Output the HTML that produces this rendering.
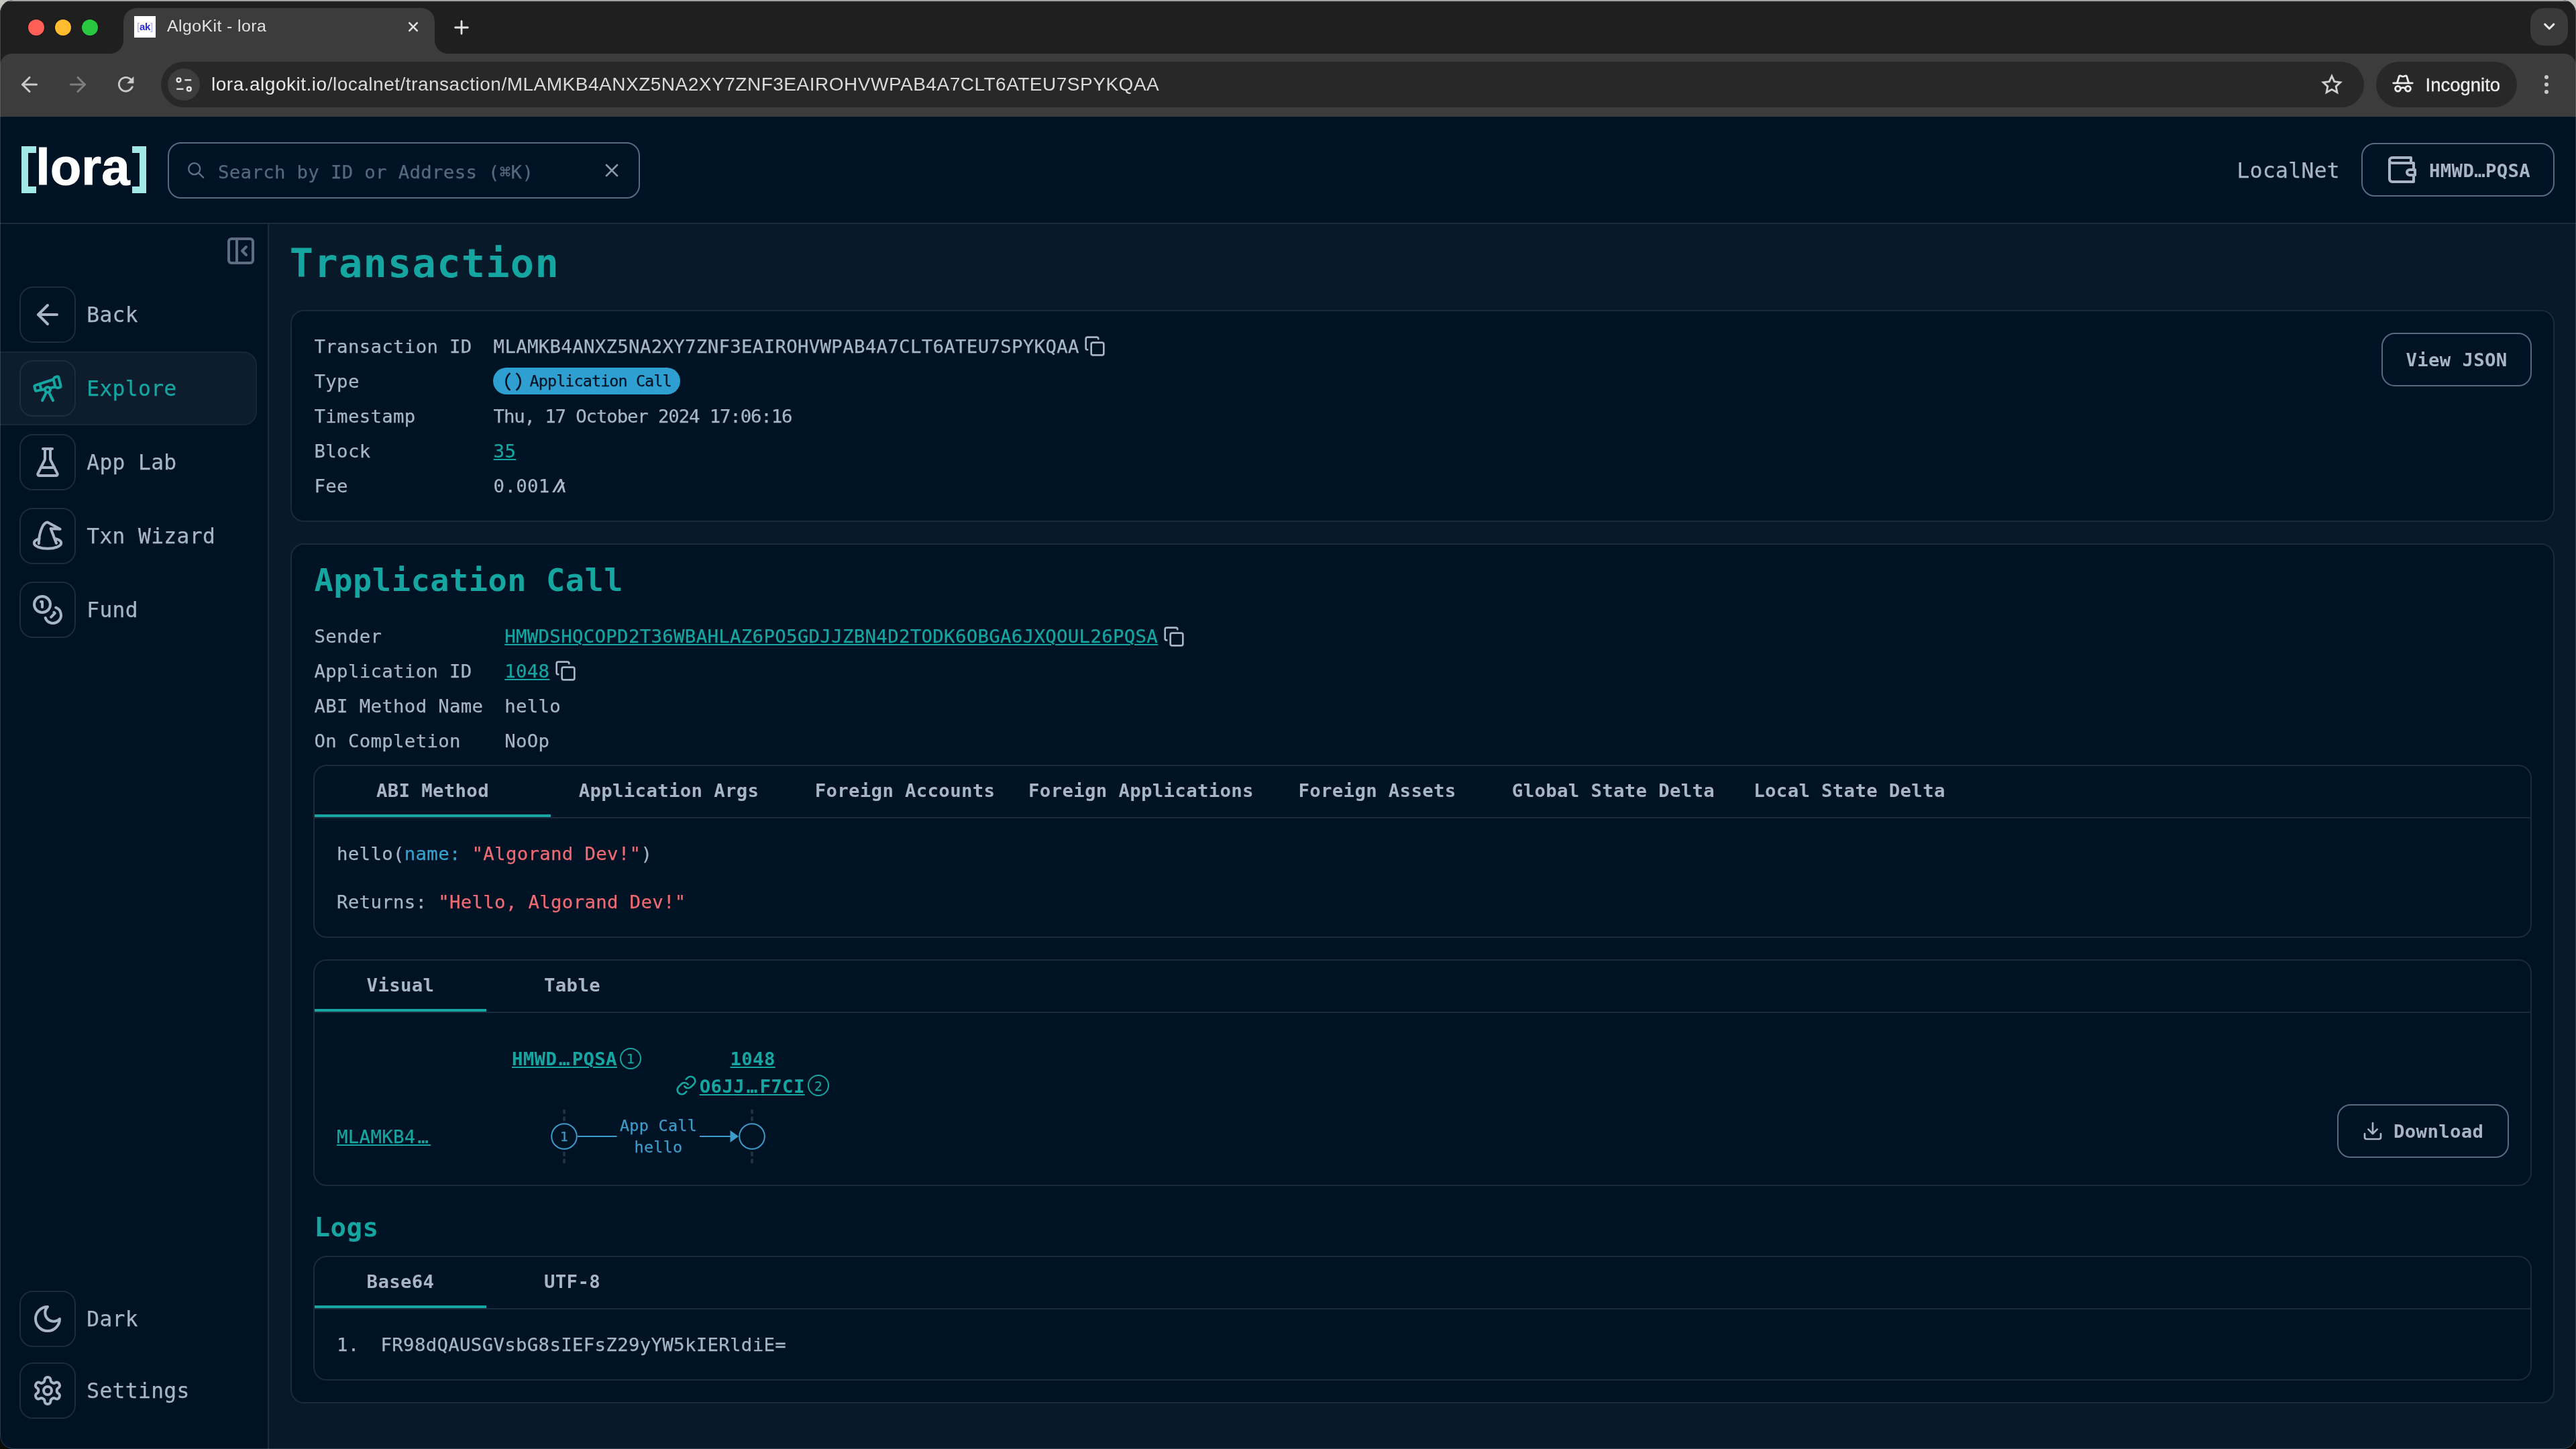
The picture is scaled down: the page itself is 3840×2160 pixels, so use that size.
<!DOCTYPE html>
<html lang="en"><head><meta charset="utf-8"><title>AlgoKit - lora</title>
<style>
html,body{margin:0;padding:0}
body{width:3840px;height:2160px;overflow:hidden;background:#0a0a08;position:relative}
#win{position:absolute;left:0;top:0;width:3840px;height:2160px;overflow:hidden;border-radius:20px;background:#001324;will-change:transform}
#corner{position:absolute;left:0;top:0;width:3840px;height:30px;background:#c6c6c1}
#edge{position:absolute;left:0;top:0;width:3840px;height:2160px;box-sizing:border-box;border-radius:20px;border:1px solid rgba(150,170,190,.28);border-top:0;pointer-events:none}
.t{position:absolute;white-space:pre;margin:0;font-weight:400}
.m{font-family:"DejaVu Sans Mono","Liberation Mono",monospace;-webkit-text-stroke:0.25px currentColor}
.m.b{-webkit-text-stroke:0}
.s{font-family:"Liberation Sans",sans-serif}
.b{font-weight:700}
a.u{text-decoration:underline;text-decoration-thickness:2px;text-underline-offset:1.500px;text-decoration-skip-ink:auto}
h1,h2,h3{margin:0}
</style></head>
<body>
<div id="corner"></div>
<div id="win">
<header id="chrome">
<div style="position:absolute;left:0px;top:0px;width:3840px;height:110px;background:#1f1f1f;"></div>
<div style="position:absolute;left:0px;top:0px;width:3840px;height:3px;background:linear-gradient(#b1b1b1 0,#b0b0b0 1.200px,#555 2px,#1b1b1b 2.700px,#1b1b1b 3px);"></div>
<div style="position:absolute;left:41.8px;top:28.8px;width:24.4px;height:24.4px;border-radius:50%;background:#fe5f57;box-shadow:0 0 0 1px rgba(0,0,0,.3);"></div>
<div style="position:absolute;left:81.8px;top:28.8px;width:24.4px;height:24.4px;border-radius:50%;background:#febc2e;box-shadow:0 0 0 1px rgba(0,0,0,.3);"></div>
<div style="position:absolute;left:121.8px;top:28.8px;width:24.4px;height:24.4px;border-radius:50%;background:#28c840;box-shadow:0 0 0 1px rgba(0,0,0,.3);"></div>
<div style="position:absolute;left:184px;top:12px;width:464px;height:68px;background:#3c3c3c;border-radius:20px 20px 0 0;"></div>
<div style="position:absolute;left:164px;top:60px;width:20px;height:20px;background:radial-gradient(circle at 0 0,rgba(60,60,60,0) 19.5px,#3c3c3c 20.5px);"></div>
<div style="position:absolute;left:648px;top:60px;width:20px;height:20px;background:radial-gradient(circle at 100% 0,rgba(60,60,60,0) 19.5px,#3c3c3c 20.5px);"></div>
<div style="position:absolute;left:200px;top:24px;width:32px;height:32px;background:#fff;"></div>
<div class="t s b" style="left:-784.00px;width:2000px;text-align:center;top:31.70px;font-size:15px;line-height:15px;color:#2b2bd8;letter-spacing:-0.3px;"><span style="color:#a8a8ee;font-weight:400">[</span>ak<span style="color:#a8a8ee;font-weight:400">]</span></div>
<div class="t s" style="left:249.00px;top:27.30px;font-size:24.8px;line-height:24.8px;color:#e3e3e3;letter-spacing:0.45px;">AlgoKit - lora</div>
<svg style="position:absolute;left:604px;top:28px;" width="24" height="24" viewBox="0 0 24 24" fill="none" stroke="#e3e3e3" stroke-width="2.6" stroke-linecap="round" stroke-linejoin="round"><path d="M6.2 6.2 17.8 17.8M17.8 6.2 6.2 17.8"/></svg>
<svg style="position:absolute;left:674px;top:26.5px;" width="28" height="28" viewBox="0 0 24 24" fill="none" stroke="#e3e3e3" stroke-width="2.4" stroke-linecap="round" stroke-linejoin="round"><path d="M12 4v16M4 12h16"/></svg>
<div style="position:absolute;left:3772px;top:12px;width:56px;height:56px;background:#3a3a3a;border-radius:20px;"></div>
<svg style="position:absolute;left:3786.85px;top:26.4px;" width="26.5" height="26.5" viewBox="0 0 24 24" fill="none" stroke="#e8e8e8" stroke-width="2.7" stroke-linecap="round" stroke-linejoin="round"><path d="m6 9.2 6 6 6-6"/></svg>
<div style="position:absolute;left:0px;top:80px;width:3840px;height:94px;background:#3c3c3c;border-radius:18px 18px 0 0;"></div>
<svg style="position:absolute;left:26px;top:108px;" width="36" height="36" viewBox="0 0 24 24" fill="none" stroke="#c9c9c9" stroke-width="2.1" stroke-linecap="round" stroke-linejoin="round"><path d="m12 19-7-7 7-7"/><path d="M19 12H5"/></svg>
<svg style="position:absolute;left:98px;top:108px;" width="36" height="36" viewBox="0 0 24 24" fill="none" stroke="#7d7d7d" stroke-width="2.1" stroke-linecap="round" stroke-linejoin="round"><path d="m12 19 7-7-7-7"/><path d="M5 12h14"/></svg>
<svg style="position:absolute;left:170.050px;top:108.450px" width="35.300" height="35.300" viewBox="0 0 24 24" fill="#c9c9c9"><path d="M17.650 6.350C16.200 4.900 14.210 4 12 4c-4.420 0-7.990 3.580-7.990 8s3.570 8 7.990 8c3.730 0 6.840-2.550 7.730-6h-2.080c-.820 2.330-3.040 4-5.650 4-3.310 0-6-2.690-6-6s2.690-6 6-6c1.660 0 3.140.690 4.220 1.780L13 11h7V4l-2.350 2.350z"/></svg>
<div style="position:absolute;left:240px;top:92px;width:3284px;height:68px;background:#282828;border-radius:34px;"></div>
<div style="position:absolute;left:250px;top:102px;width:48px;height:48px;background:#3d3d3d;border-radius:50%;"></div>
<svg style="position:absolute;left:250px;top:102px" width="48" height="48" viewBox="250 102 48 48" fill="none" stroke="#e3e3e3" stroke-width="2.400"><circle cx="266.500" cy="119.300" r="2.900"/><path d="M275.300 119.300h9.800"/><circle cx="281.800" cy="132.700" r="2.900"/><path d="M263.200 132.700h10.300"/></svg>
<div class="t s url" style="left:315.00px;top:112.09px;font-size:28px;line-height:28px;color:#dadada;letter-spacing:0.51px;"><span style="color:#e8e8e8">lora.algokit.io</span>/localnet/transaction/MLAMKB4ANXZ5NA2XY7ZNF3EAIROHVWPAB4A7CLT6ATEU7SPYKQAA</div>
<svg style="position:absolute;left:3458px;top:108px;stroke-linejoin:miter;" width="36" height="36" viewBox="0 0 24 24" fill="none" stroke="#d0d0d0" stroke-width="1.9" stroke-linecap="round" stroke-linejoin="round"><path d="M12 3.600l2.550 5.500 5.950.700-4.400 4.100 1.150 5.900L12 16.850 6.750 19.800l1.150-5.900-4.400-4.100 5.950-.700z"/></svg>
<div style="position:absolute;left:3542px;top:92px;width:210px;height:68px;background:#282828;border-radius:34px;"></div>
<svg style="position:absolute;left:3564px;top:107px;" width="36" height="36" viewBox="0 0 24 24" fill="none" stroke="#ececec" stroke-width="1.9" stroke-linecap="round" stroke-linejoin="round"><path d="M2.500 11.200h19"/><path d="M6.300 11 8.200 4.700c.2-.6.800-.9 1.400-.7l1.300.5c.7.300 1.500.3 2.200 0l1.300-.5c.6-.2 1.200.1 1.400.7L17.700 11"/><circle cx="7" cy="16.800" r="2.600"/><circle cx="17" cy="16.800" r="2.600"/><path d="M9.600 16.500c1.500-.9 3.300-.9 4.800 0"/></svg>
<div class="t s" style="left:3615.50px;top:112.92px;font-size:27.5px;line-height:27.5px;color:#ececec;letter-spacing:0.0px;-webkit-text-stroke:0.3px #ececec;">Incognito</div>
<div style="position:absolute;left:3792.7px;top:111.7px;width:6.6px;height:6.6px;border-radius:50%;background:#c9c9c9;"></div>
<div style="position:absolute;left:3792.7px;top:122.7px;width:6.6px;height:6.6px;border-radius:50%;background:#c9c9c9;"></div>
<div style="position:absolute;left:3792.7px;top:133.7px;width:6.6px;height:6.6px;border-radius:50%;background:#c9c9c9;"></div>
</header>
<header id="apphead">
<div style="position:absolute;left:0px;top:174px;width:3840px;height:158px;background:#001324;border-bottom:2px solid #1a2b3d;"></div>
<div style="position:absolute;left:32px;top:218px;width:10px;height:70px;background:#a0e7e7;"></div>
<div style="position:absolute;left:32px;top:218px;width:21.5px;height:10px;background:#a0e7e7;"></div>
<div style="position:absolute;left:32px;top:278px;width:21.5px;height:10px;background:#a0e7e7;"></div>
<div style="position:absolute;left:208px;top:218px;width:10px;height:70px;background:#a0e7e7;"></div>
<div style="position:absolute;left:196.5px;top:218px;width:21.5px;height:10px;background:#a0e7e7;"></div>
<div style="position:absolute;left:196.5px;top:278px;width:21.5px;height:10px;background:#a0e7e7;"></div>
<div class="t s b" style="left:53.50px;top:212.07px;font-size:75.5px;line-height:75.5px;color:#ffffff;letter-spacing:0.5px;-webkit-text-stroke:1.2px #fff;">lora</div>
<div style="position:absolute;left:250px;top:212px;width:704px;height:84px;box-sizing:border-box;border:2px solid #5a6980;border-radius:20px;"></div>
<svg style="position:absolute;left:270px;top:232px" width="60" height="45" viewBox="0 0 60 45" fill="none" stroke="#5e7187" stroke-width="2.300" stroke-linecap="round"><circle cx="19.700" cy="19.600" r="8.450"/><path d="M25.800 25.700 33.100 32.700"/></svg>
<div class="t m" style="left:325.00px;top:242.85px;font-size:27.356px;line-height:27.356px;color:#56687f;letter-spacing:0.330px;">Search by ID or Address (⌘K)</div>
<svg style="position:absolute;left:895.5px;top:238px;" width="32" height="32" viewBox="0 0 24 24" fill="none" stroke="#8b98ab" stroke-width="2" stroke-linecap="round" stroke-linejoin="round"><path d="M18 6 6 18"/><path d="m6 6 12 12"/></svg>
<div class="t m" style="left:3334.50px;top:239.44px;font-size:31.264px;line-height:31.264px;color:#a9b4c8;letter-spacing:0.378px;">LocalNet</div>
<div style="position:absolute;left:3520px;top:213px;width:288px;height:80px;box-sizing:border-box;border:2px solid #5a6980;border-radius:20px;"></div>
<svg style="position:absolute;left:3556.2px;top:228.8px;" width="48" height="48" viewBox="0 0 24 24" fill="none" stroke="#a9b4c8" stroke-width="2" stroke-linecap="round" stroke-linejoin="round"><path d="M21 12V7H5a2 2 0 0 1 0-4h14v4"/><path d="M3 5v14a2 2 0 0 0 2 2h16v-5"/><path d="M18 12a2 2 0 0 0 0 4h4v-4Z"/></svg>
<div class="t m b" style="left:3621.00px;top:240.75px;font-size:27.356px;line-height:27.356px;color:#a9b4c8;letter-spacing:0.330px;">HMWD…PQSA</div>
</header>
<nav id="side">
<div style="position:absolute;left:0px;top:334px;width:399px;height:1826px;background:#001324;border-right:2px solid #1a2b3d;"></div>
<svg style="position:absolute;left:335.3px;top:350px;" width="48" height="48" viewBox="0 0 24 24" fill="none" stroke="#5f6c81" stroke-width="2" stroke-linecap="round" stroke-linejoin="round"><rect width="18" height="18" x="3" y="3" rx="2"/><path d="M9 3v18"/><path d="m16 15-3-3 3-3"/></svg>
<div style="position:absolute;left:-2px;top:524px;width:385px;height:110px;box-sizing:border-box;background:#0d1d2e;border:2px solid #16273a;border-radius:0 20px 20px 0;"></div>
<div style="position:absolute;left:29px;top:427px;width:84px;height:84px;box-sizing:border-box;border:2px solid #1b2c3f;border-radius:20px;"></div>
<svg style="position:absolute;left:47px;top:445px;" width="48" height="48" viewBox="0 0 24 24" fill="none" stroke="#a9b4c8" stroke-width="2" stroke-linecap="round" stroke-linejoin="round"><path d="m12 19-7-7 7-7"/><path d="M19 12H5"/></svg>
<div class="t m" style="left:129.20px;top:454.24px;font-size:31.264px;line-height:31.264px;color:#a9b4c8;letter-spacing:0.378px;">Back</div>
<div style="position:absolute;left:29px;top:537px;width:84px;height:84px;box-sizing:border-box;border:2px solid #1d2d40;border-radius:20px;"></div>
<svg style="position:absolute;left:47px;top:555px;" width="48" height="48" viewBox="0 0 24 24" fill="none" stroke="#15a6a1" stroke-width="2" stroke-linecap="round" stroke-linejoin="round"><path d="m10.065 12.493-6.18 1.318a.934.934 0 0 1-1.108-.702l-.537-2.15a1.07 1.07 0 0 1 .691-1.265l13.504-4.44"/><path d="m13.56 11.747 4.332-.924"/><path d="m16 21-3.105-6.21"/><path d="M16.485 5.94a2 2 0 0 1 1.455-2.425l1.09-.272a1 1 0 0 1 1.212.727l1.515 6.06a1 1 0 0 1-.727 1.213l-1.09.272a2 2 0 0 1-2.425-1.455z"/><path d="m6.158 8.633 1.114 4.456"/><path d="m8 21 3.105-6.21"/><circle cx="12" cy="13" r="2"/></svg>
<div class="t m" style="left:129.20px;top:564.24px;font-size:31.264px;line-height:31.264px;color:#15a6a1;letter-spacing:0.378px;">Explore</div>
<div style="position:absolute;left:29px;top:646.5px;width:84px;height:84px;box-sizing:border-box;border:2px solid #1b2c3f;border-radius:20px;"></div>
<svg style="position:absolute;left:47px;top:664.5px;" width="48" height="48" viewBox="0 0 24 24" fill="none" stroke="#a9b4c8" stroke-width="2" stroke-linecap="round" stroke-linejoin="round"><path d="M10 2v7.527a2 2 0 0 1-.211.896L4.72 20.55a1 1 0 0 0 .9 1.45h12.76a1 1 0 0 0 .9-1.45l-5.069-10.127A2 2 0 0 1 14 9.527V2"/><path d="M8.5 2h7"/><path d="M7 16h10"/></svg>
<div class="t m" style="left:129.20px;top:673.74px;font-size:31.264px;line-height:31.264px;color:#a9b4c8;letter-spacing:0.378px;">App Lab</div>
<div style="position:absolute;left:29px;top:756.5px;width:84px;height:84px;box-sizing:border-box;border:2px solid #1b2c3f;border-radius:20px;"></div>
<svg style="position:absolute;left:47px;top:774.5px;" width="48" height="48" viewBox="0 0 24 24" fill="none" stroke="#a9b4c8" stroke-width="2" stroke-linecap="round" stroke-linejoin="round"><path d="M5.400 17.600C5.500 13 6.300 9 7.700 6 8.800 3.600 10.300 1.900 11.900 1.800L21.300 6.900 14.300 6.500 18.500 17.400"/><path d="M5.800 14.100C3.400 14.700 1.900 15.900 1.900 17.300 1.900 19.600 6.400 21.400 12 21.400S22.100 19.600 22.100 17.300C22.100 15.900 20.600 14.700 18.200 14.100"/></svg>
<div class="t m" style="left:129.20px;top:783.74px;font-size:31.264px;line-height:31.264px;color:#a9b4c8;letter-spacing:0.378px;">Txn Wizard</div>
<div style="position:absolute;left:29px;top:866.5px;width:84px;height:84px;box-sizing:border-box;border:2px solid #1b2c3f;border-radius:20px;"></div>
<svg style="position:absolute;left:47px;top:884.5px;" width="48" height="48" viewBox="0 0 24 24" fill="none" stroke="#a9b4c8" stroke-width="2" stroke-linecap="round" stroke-linejoin="round"><circle cx="8" cy="8" r="6"/><path d="M18.09 10.37A6 6 0 1 1 10.34 18"/><path d="M7 6h1v4"/><path d="m16.71 13.88.7.71-2.82 2.82"/></svg>
<div class="t m" style="left:129.20px;top:893.74px;font-size:31.264px;line-height:31.264px;color:#a9b4c8;letter-spacing:0.378px;">Fund</div>
<div style="position:absolute;left:29px;top:1924px;width:84px;height:84px;box-sizing:border-box;border:2px solid #1b2c3f;border-radius:20px;"></div>
<svg style="position:absolute;left:47px;top:1942px;" width="48" height="48" viewBox="0 0 24 24" fill="none" stroke="#a9b4c8" stroke-width="2" stroke-linecap="round" stroke-linejoin="round"><path d="M12 3a6 6 0 0 0 9 9 9 9 0 1 1-9-9Z"/></svg>
<div class="t m" style="left:129.20px;top:1951.24px;font-size:31.264px;line-height:31.264px;color:#a9b4c8;letter-spacing:0.378px;">Dark</div>
<div style="position:absolute;left:29px;top:2031px;width:84px;height:84px;box-sizing:border-box;border:2px solid #1b2c3f;border-radius:20px;"></div>
<svg style="position:absolute;left:47px;top:2049px;" width="48" height="48" viewBox="0 0 24 24" fill="none" stroke="#a9b4c8" stroke-width="2" stroke-linecap="round" stroke-linejoin="round"><path d="M12.22 2h-.44a2 2 0 0 0-2 2v.18a2 2 0 0 1-1 1.73l-.43.25a2 2 0 0 1-2 0l-.15-.08a2 2 0 0 0-2.73.73l-.22.38a2 2 0 0 0 .73 2.73l.15.1a2 2 0 0 1 1 1.72v.51a2 2 0 0 1-1 1.74l-.15.09a2 2 0 0 0-.73 2.73l.22.38a2 2 0 0 0 2.73.73l.15-.08a2 2 0 0 1 2 0l.43.25a2 2 0 0 1 1 1.73V20a2 2 0 0 0 2 2h.44a2 2 0 0 0 2-2v-.18a2 2 0 0 1 1-1.73l.43-.25a2 2 0 0 1 2 0l.15.08a2 2 0 0 0 2.73-.73l.22-.39a2 2 0 0 0-.73-2.73l-.15-.08a2 2 0 0 1-1-1.74v-.5a2 2 0 0 1 1-1.74l.15-.09a2 2 0 0 0 .73-2.73l-.22-.38a2 2 0 0 0-2.73-.73l-.15.08a2 2 0 0 1-2 0l-.43-.25a2 2 0 0 1-1-1.73V4a2 2 0 0 0-2-2z"/><circle cx="12" cy="12" r="3"/></svg>
<div class="t m" style="left:129.20px;top:2058.24px;font-size:31.264px;line-height:31.264px;color:#a9b4c8;letter-spacing:0.378px;">Settings</div>
</nav>
<main id="main">
<div style="position:absolute;left:401px;top:334px;width:3439px;height:1826px;background:#08192a;"></div>
<h1 class="t m b" style="left:431.80px;top:363.90px;font-size:58.62px;line-height:58.62px;color:#15a6a1;letter-spacing:1.278px;">Transaction</h1>
<section style="position:absolute;left:433px;top:462px;width:3375px;height:316px;box-sizing:border-box;background:#001324;border:2px solid #1a2b3d;border-radius:20px;"></section>
<div class="t m" style="left:468.50px;top:503.35px;font-size:27.356px;line-height:27.356px;color:#a9b4c8;letter-spacing:0.330px;">Transaction ID</div>
<div class="t m" style="left:468.50px;top:555.35px;font-size:27.356px;line-height:27.356px;color:#a9b4c8;letter-spacing:0.330px;">Type</div>
<div class="t m" style="left:468.50px;top:607.35px;font-size:27.356px;line-height:27.356px;color:#a9b4c8;letter-spacing:0.330px;">Timestamp</div>
<div class="t m" style="left:468.50px;top:659.35px;font-size:27.356px;line-height:27.356px;color:#a9b4c8;letter-spacing:0.330px;">Block</div>
<div class="t m" style="left:468.50px;top:711.35px;font-size:27.356px;line-height:27.356px;color:#a9b4c8;letter-spacing:0.330px;">Fee</div>
<div class="t m" style="left:735.60px;top:503.35px;font-size:27.356px;line-height:27.356px;color:#a9b4c8;letter-spacing:0.330px;">MLAMKB4ANXZ5NA2XY7ZNF3EAIROHVWPAB4A7CLT6ATEU7SPYKQAA</div>
<svg style="position:absolute;left:1616px;top:500px;" width="32" height="32" viewBox="0 0 24 24" fill="none" stroke="#a9b4c8" stroke-width="2" stroke-linecap="round" stroke-linejoin="round"><rect width="14" height="14" x="8" y="8" rx="2" ry="2"/><path d="M4 16c-1.1 0-2-.9-2-2V4c0-1.1.9-2 2-2h10c1.1 0 2 .9 2 2"/></svg>
<div style="position:absolute;left:735px;top:548px;width:279px;height:40px;background:#2e9fd0;border-radius:20px;"></div>
<svg style="position:absolute;left:749px;top:553px;" width="32" height="32" viewBox="0 0 24 24" fill="none" stroke="#001324" stroke-width="2" stroke-linecap="round" stroke-linejoin="round"><path d="M8 21s-4-3-4-9 4-9 4-9"/><path d="M16 3s4 3 4 9-4 9-4 9"/></svg>
<div class="t m" style="left:789.60px;top:557.46px;font-size:23.448px;line-height:23.448px;color:#001324;letter-spacing:-0.917px;">Application Call</div>
<div class="t m" style="left:735.60px;top:607.35px;font-size:27.356px;line-height:27.356px;color:#a9b4c8;letter-spacing:-1.126px;">Thu, 17 October 2024 17:06:16</div>
<a class="t m u" style="left:735.60px;top:659.35px;font-size:27.356px;line-height:27.356px;color:#15a6a1;letter-spacing:0.330px;">35</a>
<div class="t m" style="left:735.60px;top:711.35px;font-size:27.356px;line-height:27.356px;color:#a9b4c8;letter-spacing:0.330px;">0.001</div>
<svg style="position:absolute;left:823.200px;top:714px" width="20" height="20" viewBox="20 4 192.500 192.500" fill="#a9b4c8"><polygon points="212.100,196.300 181.900,196.300 162.400,123.500 120.400,196.300 86.800,196.300 151.700,83.800 141.200,44.700 53.700,196.300 20.100,196.300 131,4.100 160.400,4.100 173.200,51.900 203.600,51.900 182.900,87.900"/></svg>
<div style="position:absolute;left:3550px;top:496px;width:224px;height:80px;box-sizing:border-box;border:2px solid #5a6980;border-radius:20px;"></div>
<div class="t m b" style="left:2662.00px;width:2000px;text-align:center;top:523.35px;font-size:27.356px;line-height:27.356px;color:#a9b4c8;letter-spacing:0.330px;">View JSON</div>
<section style="position:absolute;left:433px;top:810px;width:3375px;height:1282px;box-sizing:border-box;background:#001324;border:2px solid #1a2b3d;border-radius:20px;"></section>
<h2 class="t m b" style="left:468.50px;top:842.32px;font-size:46.896px;line-height:46.896px;color:#15a6a1;letter-spacing:0.566px;">Application Call</h2>
<div class="t m" style="left:468.50px;top:935.35px;font-size:27.356px;line-height:27.356px;color:#a9b4c8;letter-spacing:0.330px;">Sender</div>
<div class="t m" style="left:468.50px;top:987.35px;font-size:27.356px;line-height:27.356px;color:#a9b4c8;letter-spacing:0.330px;">Application ID</div>
<div class="t m" style="left:468.50px;top:1039.35px;font-size:27.356px;line-height:27.356px;color:#a9b4c8;letter-spacing:0.330px;">ABI Method Name</div>
<div class="t m" style="left:468.50px;top:1091.35px;font-size:27.356px;line-height:27.356px;color:#a9b4c8;letter-spacing:0.330px;">On Completion</div>
<a class="t m u" style="left:752.20px;top:935.35px;font-size:27.356px;line-height:27.356px;color:#15a6a1;letter-spacing:0.330px;">HMWDSHQCOPD2T36WBAHLAZ6PO5GDJJZBN4D2TODK6OBGA6JXQOUL26PQSA</a>
<svg style="position:absolute;left:1734px;top:933px;" width="32" height="32" viewBox="0 0 24 24" fill="none" stroke="#a9b4c8" stroke-width="2" stroke-linecap="round" stroke-linejoin="round"><rect width="14" height="14" x="8" y="8" rx="2" ry="2"/><path d="M4 16c-1.1 0-2-.9-2-2V4c0-1.1.9-2 2-2h10c1.1 0 2 .9 2 2"/></svg>
<a class="t m u" style="left:752.20px;top:987.35px;font-size:27.356px;line-height:27.356px;color:#15a6a1;letter-spacing:0.330px;">1048</a>
<svg style="position:absolute;left:827px;top:984px;" width="32" height="32" viewBox="0 0 24 24" fill="none" stroke="#a9b4c8" stroke-width="2" stroke-linecap="round" stroke-linejoin="round"><rect width="14" height="14" x="8" y="8" rx="2" ry="2"/><path d="M4 16c-1.1 0-2-.9-2-2V4c0-1.1.9-2 2-2h10c1.1 0 2 .9 2 2"/></svg>
<div class="t m" style="left:752.20px;top:1039.35px;font-size:27.356px;line-height:27.356px;color:#a9b4c8;letter-spacing:0.330px;">hello</div>
<div class="t m" style="left:752.20px;top:1091.35px;font-size:27.356px;line-height:27.356px;color:#a9b4c8;letter-spacing:0.330px;">NoOp</div>
<div style="position:absolute;left:467px;top:1140px;width:3307px;height:258px;box-sizing:border-box;border:2px solid #1a2b3d;border-radius:20px;"></div>
<div style="position:absolute;left:469px;top:1142px;width:3303px;height:76px;border-bottom:2px solid #1a2b3d;"></div><div style="position:absolute;left:469px;top:1214px;width:352px;height:4px;background:#15a6a1;"></div><div class="t m b" style="left:-355.00px;width:2000px;text-align:center;top:1165.35px;font-size:27.356px;line-height:27.356px;color:#a9b4c8;letter-spacing:0.330px;">ABI Method</div><div class="t m b" style="left:-3.00px;width:2000px;text-align:center;top:1165.35px;font-size:27.356px;line-height:27.356px;color:#a9b4c8;letter-spacing:0.330px;">Application Args</div><div class="t m b" style="left:349.00px;width:2000px;text-align:center;top:1165.35px;font-size:27.356px;line-height:27.356px;color:#a9b4c8;letter-spacing:0.330px;">Foreign Accounts</div><div class="t m b" style="left:701.00px;width:2000px;text-align:center;top:1165.35px;font-size:27.356px;line-height:27.356px;color:#a9b4c8;letter-spacing:0.330px;">Foreign Applications</div><div class="t m b" style="left:1053.00px;width:2000px;text-align:center;top:1165.35px;font-size:27.356px;line-height:27.356px;color:#a9b4c8;letter-spacing:0.330px;">Foreign Assets</div><div class="t m b" style="left:1405.00px;width:2000px;text-align:center;top:1165.35px;font-size:27.356px;line-height:27.356px;color:#a9b4c8;letter-spacing:0.330px;">Global State Delta</div><div class="t m b" style="left:1757.00px;width:2000px;text-align:center;top:1165.35px;font-size:27.356px;line-height:27.356px;color:#a9b4c8;letter-spacing:0.330px;">Local State Delta</div>
<div class="t m" style="left:502.00px;top:1258.85px;font-size:27.356px;line-height:27.356px;color:#a9b4c8;letter-spacing:0.330px;">hello(<span style="color:#35a2cf">name:</span> <span style="color:#ef6a73">"Algorand Dev!"</span>)</div>
<div class="t m" style="left:502.00px;top:1331.35px;font-size:27.356px;line-height:27.356px;color:#a9b4c8;letter-spacing:0.330px;">Returns: <span style="color:#ef6a73">"Hello, Algorand Dev!"</span></div>
<div style="position:absolute;left:467px;top:1430px;width:3307px;height:338px;box-sizing:border-box;border:2px solid #1a2b3d;border-radius:20px;"></div>
<div style="position:absolute;left:469px;top:1432px;width:3303px;height:76px;border-bottom:2px solid #1a2b3d;"></div><div style="position:absolute;left:469px;top:1504px;width:256px;height:4px;background:#15a6a1;"></div><div class="t m b" style="left:-403.00px;width:2000px;text-align:center;top:1454.85px;font-size:27.356px;line-height:27.356px;color:#a9b4c8;letter-spacing:0.330px;">Visual</div><div class="t m b" style="left:-147.00px;width:2000px;text-align:center;top:1454.85px;font-size:27.356px;line-height:27.356px;color:#a9b4c8;letter-spacing:0.330px;">Table</div>
<a class="t m b u" style="left:763.00px;top:1565.35px;font-size:27.356px;line-height:27.356px;color:#15a6a1;letter-spacing:0.330px;">HMW<span style="letter-spacing:3.200px">D…</span>PQSA</a>
<a class="t m b u" style="left:1088.50px;top:1565.35px;font-size:27.356px;line-height:27.356px;color:#15a6a1;letter-spacing:0.330px;">1048</a>
<a class="t m b u" style="left:1042.80px;top:1605.75px;font-size:27.356px;line-height:27.356px;color:#15a6a1;letter-spacing:0.330px;">O6J<span style="letter-spacing:3.200px">J…</span>F7CI</a>
<svg style="position:absolute;left:1007px;top:1602px;" width="32" height="32" viewBox="0 0 24 24" fill="none" stroke="#15a6a1" stroke-width="2" stroke-linecap="round" stroke-linejoin="round"><path d="M10 13a5 5 0 0 0 7.54.54l3-3a5 5 0 0 0-7.07-7.07l-1.72 1.71"/><path d="M14 11a5 5 0 0 0-7.54-.54l-3 3a5 5 0 0 0 7.07 7.07l1.71-1.71"/></svg>
<div style="position:absolute;left:924px;top:1562px;width:32px;height:32px;box-sizing:border-box;border:2px solid #15a6a1;border-radius:50%;"></div>
<div class="t m" style="left:-60.00px;width:2000px;text-align:center;top:1569.27px;font-size:19.54px;line-height:19.54px;color:#15a6a1;letter-spacing:0.236px;">1</div>
<div style="position:absolute;left:1204px;top:1602.3px;width:32px;height:32px;box-sizing:border-box;border:2px solid #15a6a1;border-radius:50%;"></div>
<div class="t m" style="left:220.00px;width:2000px;text-align:center;top:1609.57px;font-size:19.54px;line-height:19.54px;color:#15a6a1;letter-spacing:0.236px;">2</div>
<a class="t m u" style="left:502.00px;top:1681.35px;font-size:27.356px;line-height:27.356px;color:#15a6a1;letter-spacing:0.330px;">MLAMKB<span style="letter-spacing:3.200px">4…</span></a>
<svg style="position:absolute;left:800px;top:1640px" width="360" height="110" viewBox="800 1640 360 110" fill="none"><path d="M841 1654V1734" stroke="#233446" stroke-width="3.500" stroke-dasharray="6.500 4"/><circle cx="841" cy="1694" r="18.800" fill="#001324" stroke="#3e9ccb" stroke-width="2"/><path d="M1121 1654V1734" stroke="#233446" stroke-width="3.500" stroke-dasharray="6.500 4"/><circle cx="1121" cy="1694" r="18.800" fill="#001324" stroke="#3e9ccb" stroke-width="2"/><path d="M861 1694H919.500M1043 1694H1090" stroke="#3e9ccb" stroke-width="2"/><path d="M1088.500 1685 1101 1694 1088.500 1703z" fill="#3e9ccb"/></svg>
<div class="t m" style="left:-159.00px;width:2000px;text-align:center;top:1684.97px;font-size:19.54px;line-height:19.54px;color:#3e9ccb;letter-spacing:0.236px;">1</div>
<div class="t m" style="left:-18.50px;width:2000px;text-align:center;top:1666.96px;font-size:23.448px;line-height:23.448px;color:#3e9ccb;letter-spacing:0.283px;">App Call</div>
<div class="t m" style="left:-18.50px;width:2000px;text-align:center;top:1699.26px;font-size:23.448px;line-height:23.448px;color:#3e9ccb;letter-spacing:0.283px;">hello</div>
<div style="position:absolute;left:3484px;top:1646px;width:256px;height:80px;box-sizing:border-box;border:2px solid #5a6980;border-radius:20px;"></div>
<svg style="position:absolute;left:3521px;top:1670px;" width="32" height="32" viewBox="0 0 24 24" fill="none" stroke="#a9b4c8" stroke-width="2" stroke-linecap="round" stroke-linejoin="round"><path d="M21 15v4a2 2 0 0 1-2 2H5a2 2 0 0 1-2-2v-4"/><polyline points="7 10 12 15 17 10"/><line x1="12" x2="12" y1="15" y2="3"/></svg>
<div class="t m b" style="left:3568.00px;top:1673.35px;font-size:27.356px;line-height:27.356px;color:#a9b4c8;letter-spacing:0.330px;">Download</div>
<h3 class="t m b" style="left:468.50px;top:1810.43px;font-size:39.08px;line-height:39.08px;color:#15a6a1;letter-spacing:0.472px;">Logs</h3>
<div style="position:absolute;left:467px;top:1872px;width:3307px;height:186px;box-sizing:border-box;border:2px solid #1a2b3d;border-radius:20px;"></div>
<div style="position:absolute;left:469px;top:1874px;width:3303px;height:76px;border-bottom:2px solid #1a2b3d;"></div><div style="position:absolute;left:469px;top:1946px;width:256px;height:4px;background:#15a6a1;"></div><div class="t m b" style="left:-403.00px;width:2000px;text-align:center;top:1897.35px;font-size:27.356px;line-height:27.356px;color:#a9b4c8;letter-spacing:0.330px;">Base64</div><div class="t m b" style="left:-147.00px;width:2000px;text-align:center;top:1897.35px;font-size:27.356px;line-height:27.356px;color:#a9b4c8;letter-spacing:0.330px;">UTF-8</div>
<div class="t m" style="left:502.00px;top:1990.85px;font-size:27.356px;line-height:27.356px;color:#a9b4c8;letter-spacing:0.330px;">1.</div>
<div class="t m" style="left:567.50px;top:1990.85px;font-size:27.356px;line-height:27.356px;color:#a9b4c8;letter-spacing:0.330px;">FR98dQAUSGVsbG8sIEFsZ29yYW5kIERldiE=</div>
</main>
<div id="edge"></div>
</div>
</body></html>
